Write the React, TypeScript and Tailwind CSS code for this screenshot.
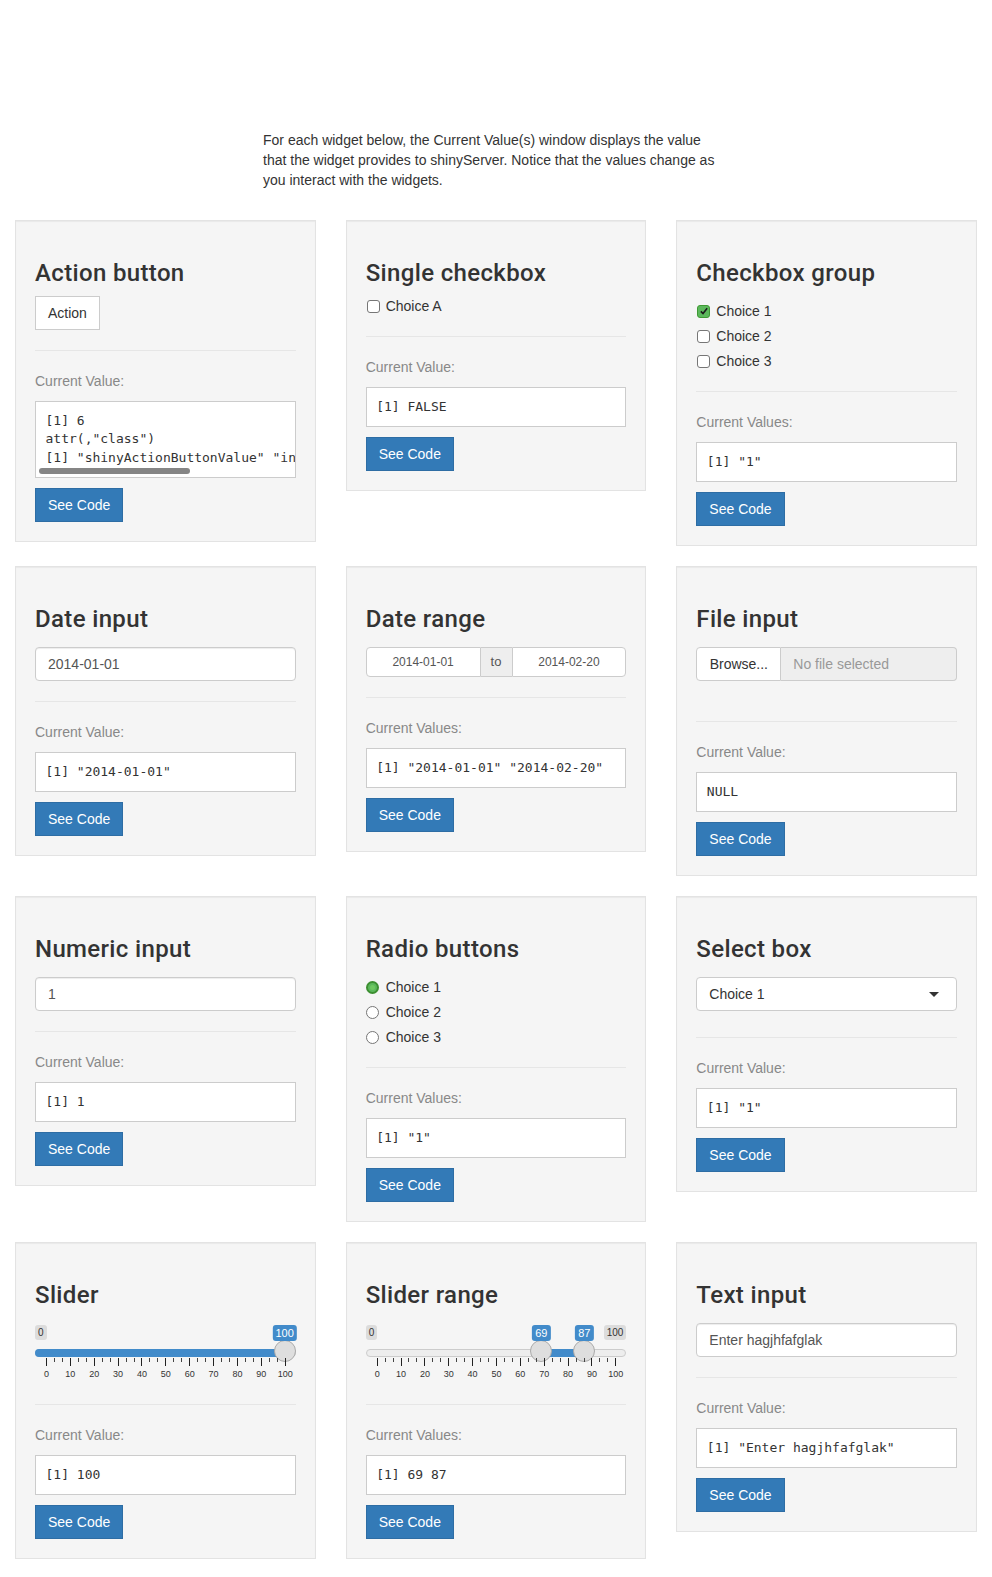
import type { ReactNode } from 'react';

const MONO = "font-['DejaVu_Sans_Mono',Menlo,monospace]";

function Well({
  title,
  label,
  value,
  children,
  scroll,
}: {
  title: string;
  label: string;
  value: string;
  children: ReactNode;
  scroll?: boolean;
}) {
  return (
    <div className="flex flex-col border border-[#e3e3e3] bg-[#f5f5f5] p-[19px] shadow-[inset_0_1px_1px_rgba(0,0,0,0.05)]">
      <h3 className="mt-[20px] mb-[10px] font-['Roboto',Arial,sans-serif] text-[24px] leading-[1.1] font-medium tracking-[0.35px] text-[#333]">
        {title}
      </h3>
      {children}
      <hr className="my-[20px] border-t border-[#e6e6e6]" />
      <p className="mb-[10px] text-[14px] leading-[20px] text-[#888]">{label}</p>
      <pre
        className={`relative mb-[10px] overflow-hidden border border-[#ccc] bg-white p-[9.5px] text-[13px] leading-[18.57px] whitespace-pre text-[#333] ${MONO}`}
      >
        {value}
        {scroll && (
          <span className="absolute bottom-[3px] left-[3px] h-[6px] w-[151px] rounded-full bg-[#858585]" />
        )}
      </pre>
      <button className="h-[34px] self-start border border-[#2e6da4] bg-[#337ab7] px-[12px] text-[14px] leading-[20px] text-white">
        See Code
      </button>
    </div>
  );
}

function CheckBox({ checked }: { checked?: boolean }) {
  if (checked) {
    return (
      <span className="ml-px mr-[6px] flex h-[13px] w-[13px] items-center justify-center rounded-[3px] border border-[#3f9a34] bg-[#5cb85c]">
        <svg viewBox="0 0 12 12" className="h-[10px] w-[10px]">
          <path d="M2.2 6.4 L4.8 9 L9.8 2.8" fill="none" stroke="#1b1b1b" strokeWidth="1.9" />
        </svg>
      </span>
    );
  }
  return <span className="ml-px mr-[6px] h-[13px] w-[13px] rounded-[3px] border border-[#767676] bg-white" />;
}

function Radio({ checked }: { checked?: boolean }) {
  if (checked) {
    return (
      <span className="mr-[7px] flex h-[13px] w-[13px] items-center justify-center rounded-full border-2 border-[#3c8f31] bg-[#5cb85c]">
        <span className="h-[5px] w-[5px] rounded-full bg-[#6fc861]" />
      </span>
    );
  }
  return <span className="mr-[7px] h-[13px] w-[13px] rounded-full border border-[#767676] bg-white" />;
}

function Choices({ items, kind, checked }: { items: string[]; kind: 'box' | 'radio'; checked: number }) {
  return (
    <div className="mt-[5px] flex flex-col gap-[5px]">
      {items.map((item, i) => (
        <div key={item} className="flex h-[20px] items-center text-[14px] text-[#333]">
          {kind === 'box' ? <CheckBox checked={i === checked} /> : <Radio checked={i === checked} />}
          <span>{item}</span>
        </div>
      ))}
    </div>
  );
}

function TextBox({ value }: { value: string }) {
  return (
    <div className="mt-[5px] flex h-[34px] items-center rounded-[4px] border border-[#ccc] bg-white px-[12px] text-[14px] text-[#555] shadow-[inset_0_1px_1px_rgba(0,0,0,0.075)]">
      {value}
    </div>
  );
}

function Slider({ from, to }: { from: number; to?: number }) {
  const pos = (v: number) => `calc(11px + (100% - 22px) * ${v / 100})`;
  const majors = Array.from({ length: 11 }, (_, i) => i * 10);
  const minors: number[] = [];
  for (let i = 0; i < 10; i++) {
    minors.push(i * 10 + 10 / 3, i * 10 + 20 / 3);
  }
  const values = to === undefined ? [from] : [from, to];

  return (
    <div className="relative mt-[5px] h-[61px]">
      <span className="absolute top-[2px] left-0 rounded-[3px] bg-[rgba(0,0,0,0.1)] px-[3px] py-px text-[10px] leading-[13px] text-[#333]">
        0
      </span>
      {to !== undefined && (
        <span className="absolute top-[2px] right-0 rounded-[3px] bg-[rgba(0,0,0,0.1)] px-[3px] py-px text-[10px] leading-[13px] text-[#333]">
          100
        </span>
      )}
      <div className="absolute inset-x-0 top-[26px] h-[8px] rounded-[8px] border border-[#ccc] bg-[#ededed]" />
      {to === undefined ? (
        <div className="absolute top-[26px] left-0 h-[8px] rounded-l-[8px] bg-[#428bca]" style={{ width: pos(from) }} />
      ) : (
        <div
          className="absolute top-[26px] h-[8px] bg-[#428bca]"
          style={{ left: pos(from), width: `calc((100% - 22px) * ${(to - from) / 100})` }}
        />
      )}
      {values.map((v) => (
        <span
          key={`h${v}`}
          className="absolute top-[17px] -ml-[11px] h-[22px] w-[22px] rounded-full border border-[#aaa] bg-[#dedede]"
          style={{ left: pos(v) }}
        />
      ))}
      {values.map((v) => (
        <span
          key={`l${v}`}
          className="absolute top-[2px] -translate-x-1/2 rounded-[3px] bg-[#428bca] px-[3px] py-px text-[11px] leading-[14px] text-white"
          style={{ left: pos(v) }}
        >
          {v}
        </span>
      ))}
      {majors.map((v) => (
        <span key={`t${v}`} className="absolute top-[35px] h-[8px] w-px bg-[#222]" style={{ left: pos(v) }} />
      ))}
      {minors.map((v) => (
        <span key={`m${v}`} className="absolute top-[35px] h-[4px] w-px bg-[#444]" style={{ left: pos(v) }} />
      ))}
      {majors.map((v) => (
        <span
          key={`g${v}`}
          className="absolute top-[47px] -translate-x-1/2 text-[9px] leading-[9px] text-[#333]"
          style={{ left: `calc(${pos(v)} + 0.5px)` }}
        >
          {v}
        </span>
      ))}
    </div>
  );
}

export default function App() {
  return (
    <div className="bg-white pt-[130px] pb-px font-['Liberation_Sans',Arial,sans-serif] text-[14px] leading-[20px] text-[#333]">
      <div className="mb-[30px] grid grid-cols-12 gap-x-[30px] px-[15px]">
        <p className="col-span-6 col-start-4">
          For each widget below, the Current Value(s) window displays the value
          <br />
          that the widget provides to shinyServer. Notice that the values change as
          <br />
          you interact with the widgets.
        </p>
      </div>

      <div className="flex flex-col gap-[20px] px-[15px] pb-[20px]">
        <div className="grid grid-cols-3 items-start gap-x-[30px]">
          <Well
            title="Action button"
            label="Current Value:"
            value={'[1] 6\nattr(,"class")\n[1] "shinyActionButtonValue" "integer"'}
            scroll
          >
            <button className="h-[34px] self-start border border-[#ccc] bg-white px-[12px] text-[14px] text-[#333]">
              Action
            </button>
          </Well>
          <Well title="Single checkbox" label="Current Value:" value="[1] FALSE">
            <div className="flex h-[20px] items-center text-[14px] text-[#333]">
              <CheckBox />
              <span>Choice A</span>
            </div>
          </Well>
          <Well title="Checkbox group" label="Current Values:" value={'[1] "1"'}>
            <Choices kind="box" items={['Choice 1', 'Choice 2', 'Choice 3']} checked={0} />
          </Well>
        </div>

        <div className="grid grid-cols-3 items-start gap-x-[30px]">
          <Well title="Date input" label="Current Value:" value={'[1] "2014-01-01"'}>
            <TextBox value="2014-01-01" />
          </Well>
          <Well title="Date range" label="Current Values:" value={'[1] "2014-01-01" "2014-02-20"'}>
            <div className="mt-[5px] flex h-[30px] text-[12px] text-[#555]">
              <div className="flex flex-1 items-center justify-center rounded-l-[4px] border border-[#ccc] bg-white">
                2014-01-01
              </div>
              <div className="flex w-[31px] items-center justify-center border-y border-[#ccc] bg-[#eee] text-[13px]">
                to
              </div>
              <div className="flex flex-1 items-center justify-center rounded-r-[4px] border border-[#ccc] bg-white">
                2014-02-20
              </div>
            </div>
          </Well>
          <Well title="File input" label="Current Value:" value="NULL">
            <div className="mt-[5px] mb-[20px] flex h-[34px] text-[14px]">
              <div className="flex w-[85px] items-center justify-center rounded-l-[4px] border border-[#ccc] bg-white text-[#333]">
                Browse...
              </div>
              <div className="flex flex-1 items-center rounded-r-[4px] border border-l-0 border-[#ccc] bg-[#eee] px-[12px] text-[#999]">
                No file selected
              </div>
            </div>
          </Well>
        </div>

        <div className="grid grid-cols-3 items-start gap-x-[30px]">
          <Well title="Numeric input" label="Current Value:" value="[1] 1">
            <TextBox value="1" />
          </Well>
          <Well title="Radio buttons" label="Current Values:" value={'[1] "1"'}>
            <Choices kind="radio" items={['Choice 1', 'Choice 2', 'Choice 3']} checked={0} />
          </Well>
          <Well title="Select box" label="Current Value:" value={'[1] "1"'}>
            <div className="mt-[5px] mb-[6px] flex h-[34px] items-center justify-between rounded-[4px] border border-[#ccc] bg-white pr-[17px] pl-[12px] text-[14px] text-[#333]">
              <span>Choice 1</span>
              <span className="h-0 w-0 border-x-[5px] border-t-[5px] border-x-transparent border-t-[#333]" />
            </div>
          </Well>
        </div>

        <div className="grid grid-cols-3 items-start gap-x-[30px]">
          <Well title="Slider" label="Current Value:" value="[1] 100">
            <Slider from={100} />
          </Well>
          <Well title="Slider range" label="Current Values:" value="[1] 69 87">
            <Slider from={69} to={87} />
          </Well>
          <Well title="Text input" label="Current Value:" value={'[1] "Enter hagjhfafglak"'}>
            <TextBox value="Enter hagjhfafglak" />
          </Well>
        </div>
      </div>
    </div>
  );
}
